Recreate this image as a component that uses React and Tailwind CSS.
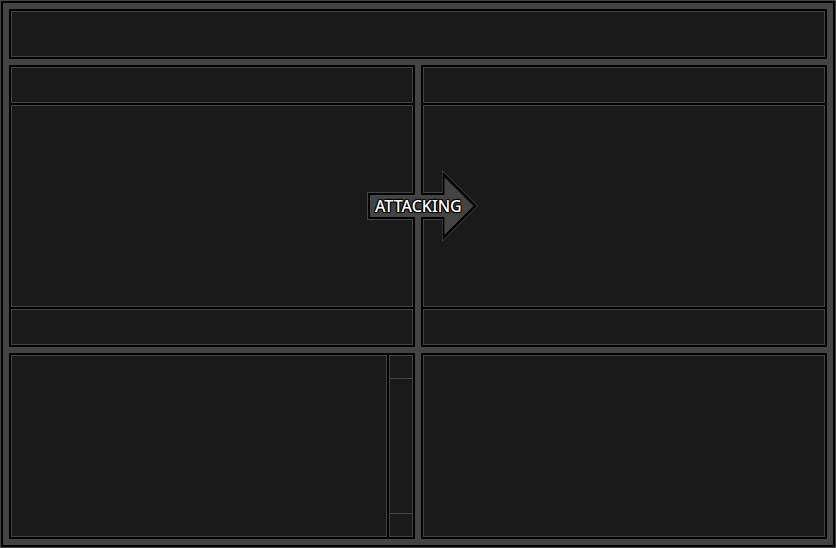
function Panel({ className = "", children }) {
  return <div className={`border border-[#444] bg-[#1a1a1a] ${className}`}>{children}</div>;
}

function Team({ label }) {
  return (
    <section aria-label={label} className="flex min-w-0 flex-1 flex-col gap-0.5 bg-black p-0.5">
      <Panel className="h-9" />
      <Panel className="h-[202px]" />
      <Panel className="h-9" />
    </section>
  );
}

function AttackArrow() {
  return (
    <div className="absolute top-1/2 left-1/2 h-[72px] w-[112px] -translate-x-[51px] -translate-y-1/2">
      <svg viewBox="0 0 112 72" className="absolute inset-0 h-full w-full" aria-hidden="true">
        <path d="M0 22H75V0L111 36L75 72V50H0Z" fill="#444" />
        <path d="M1 23H75.7V1.7L110 36L75.7 70.3V49H1Z" fill="#000" />
        <path d="M3 25H77.4V7L106.6 36L77.4 65V47H3Z" fill="#444" />
        <path d="M46 20H54V25H46ZM46 47H54V52H46Z" fill="#000" />
        <path d="M48 20H54V52H48Z" fill="#444" />
        <path d="M54 20H56V25H54ZM54 47H56V52H54Z" fill="#000" />
      </svg>
      <span className="absolute inset-y-0 left-2 flex items-center font-['Noto_Sans',sans-serif] text-base leading-6 font-medium text-white [text-shadow:1px_1px_1px_#000,-1px_-1px_1px_#000,1px_-1px_1px_#000,-1px_1px_1px_#000]">
        ATTACKING
      </span>
    </div>
  );
}

export default function App() {
  return (
    <div className="flex min-h-screen border border-[#444] bg-black p-0.5">
      <main className="flex min-w-0 flex-1 flex-col gap-1.5 bg-[#444] p-1.5">
        <header className="bg-black p-0.5">
          <Panel className="h-[46px]" />
        </header>
        <div className="relative flex gap-1.5">
          <Team label="Attacker" />
          <Team label="Defender" />
          <AttackArrow />
        </div>
        <div className="flex min-h-[186px] flex-1 gap-1.5">
          <section aria-label="Log" className="flex min-w-0 flex-1 gap-0.5 bg-black p-0.5">
            <Panel className="min-w-0 flex-1" />
            <Panel className="flex w-6 flex-col">
              <button aria-label="Scroll up" className="h-[23px] border-b border-[#444]" />
              <div className="flex-1" />
              <button aria-label="Scroll down" className="h-[23px] border-t border-[#444]" />
            </Panel>
          </section>
          <section aria-label="Actions" className="flex min-w-0 flex-1 bg-black p-0.5">
            <Panel className="flex-1" />
          </section>
        </div>
      </main>
    </div>
  );
}
